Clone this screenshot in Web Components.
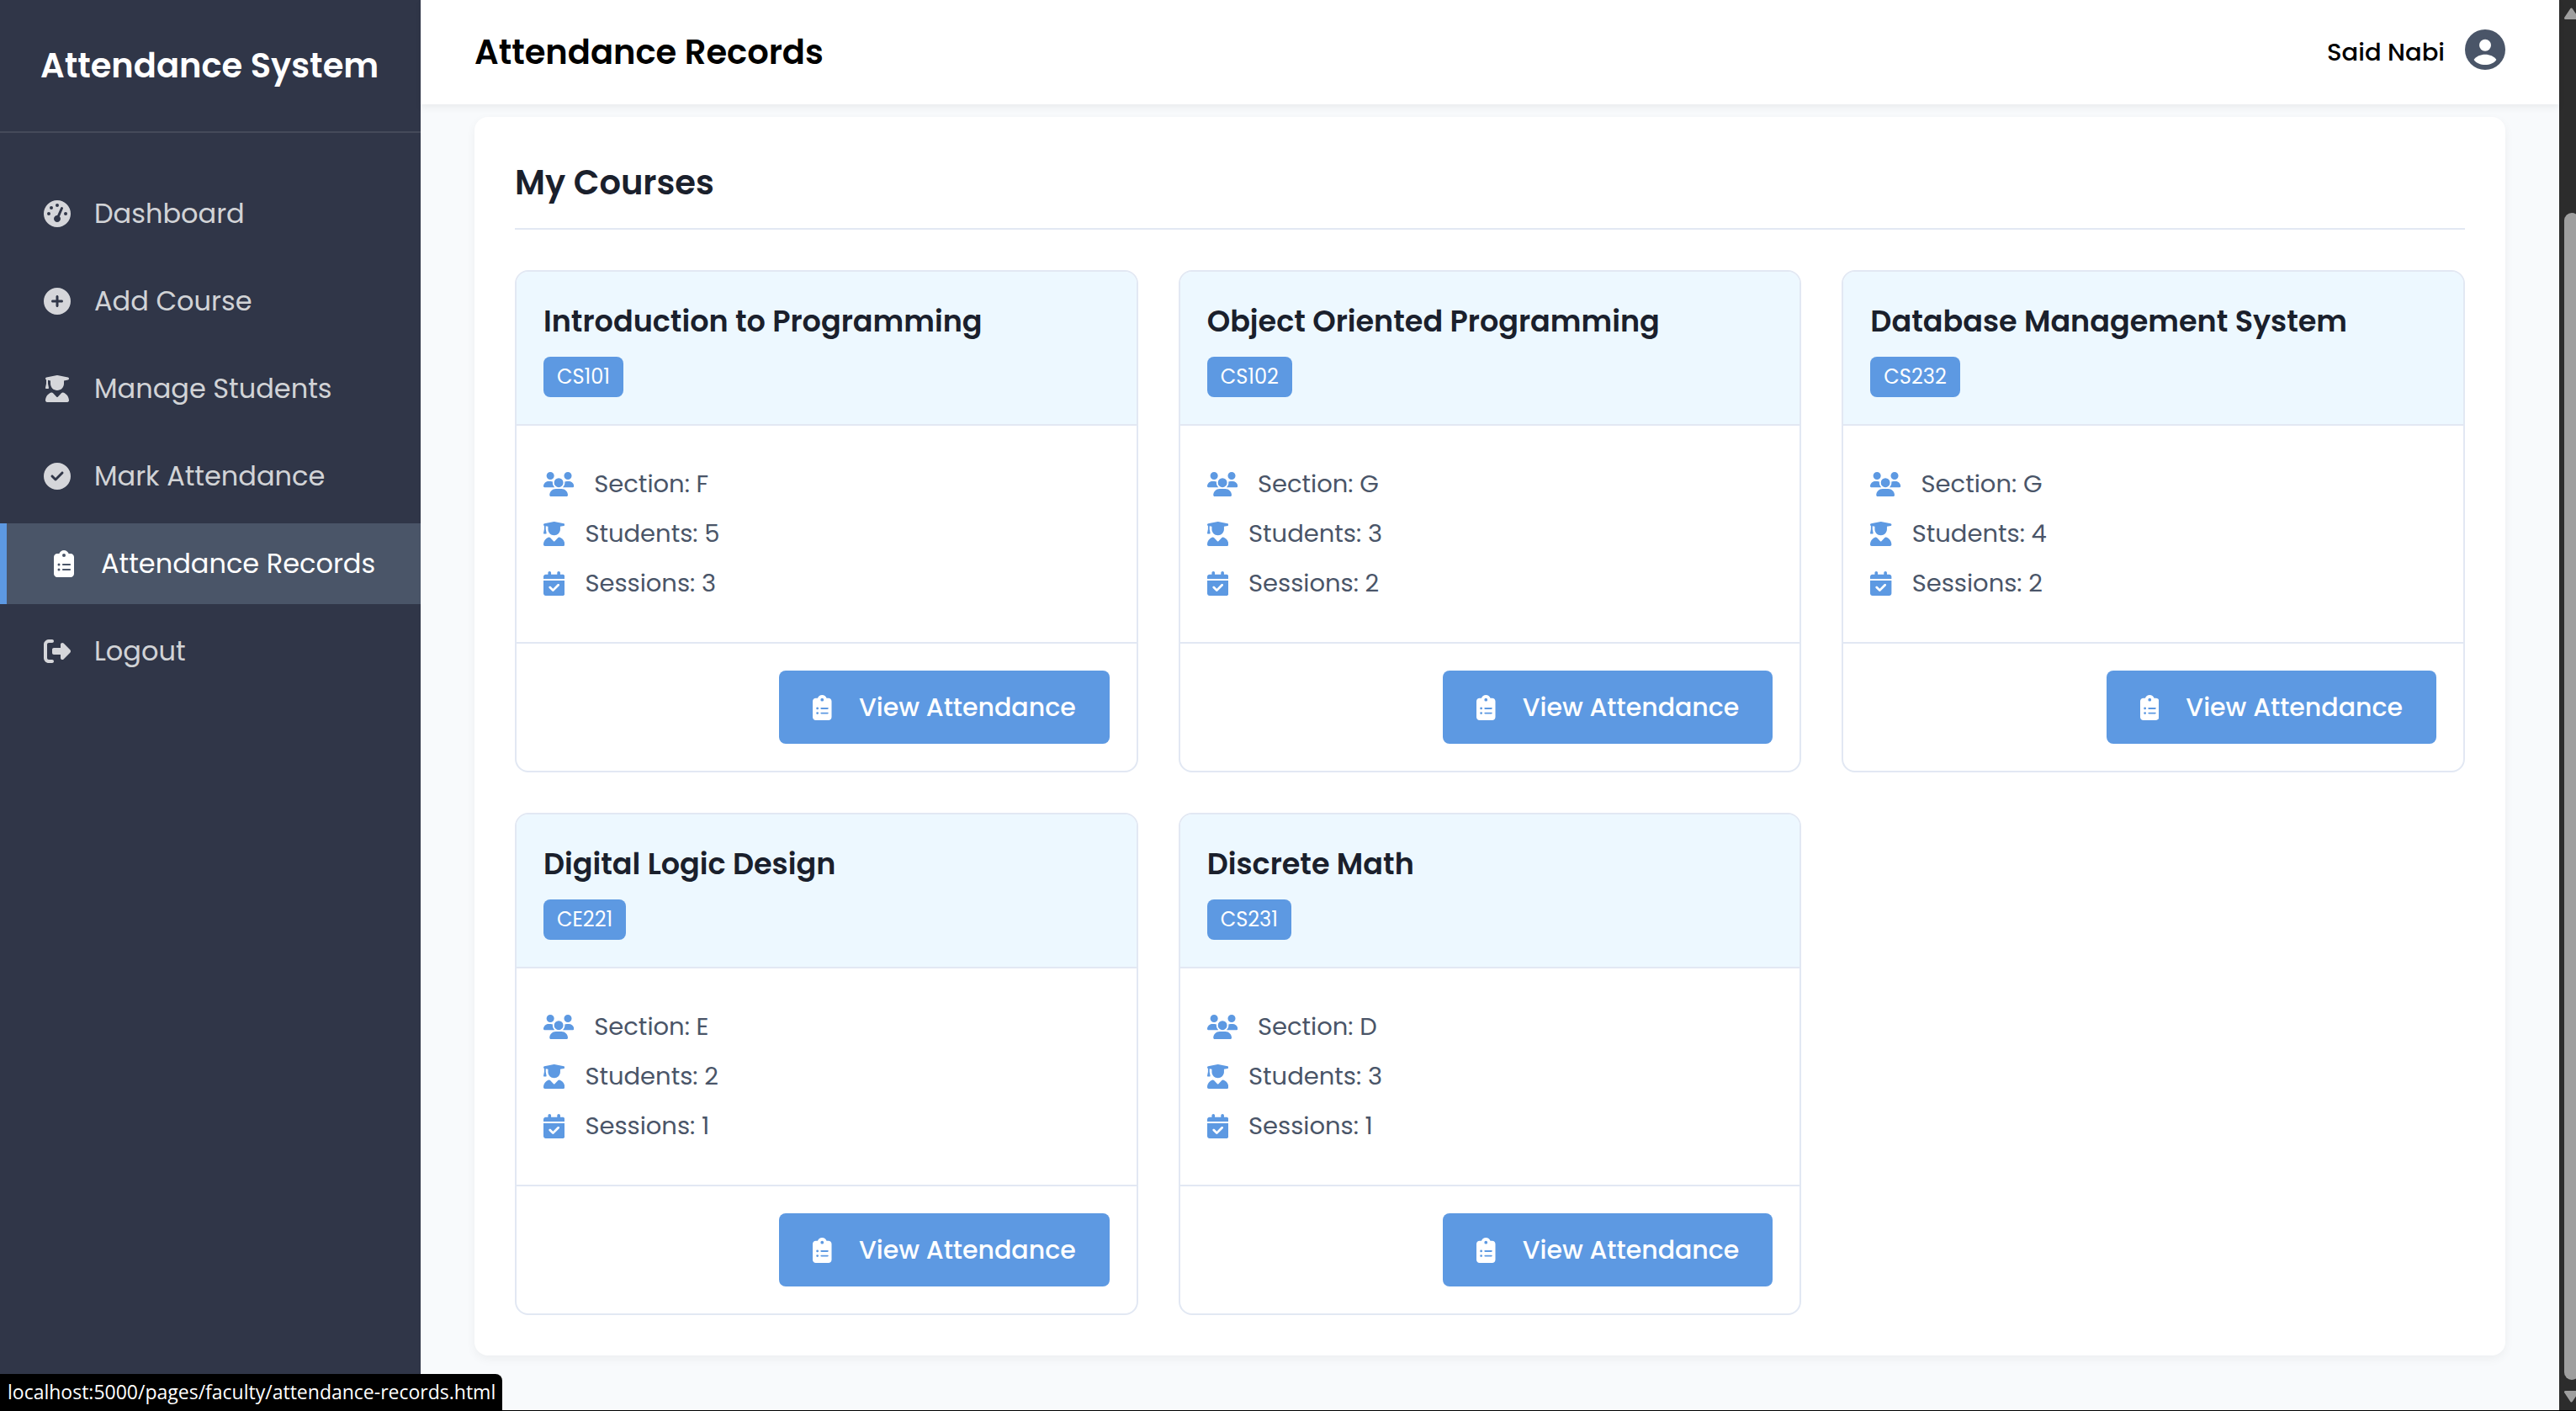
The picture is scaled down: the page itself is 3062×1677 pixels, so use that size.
<!DOCTYPE html>
<html lang="en">
<head>
<meta charset="utf-8">
<title>Attendance Records</title>
<style>
  :root {
    --primary: #5d99e2;
    --text-dark: #1a202c;
    --text-mid: #4a5568;
    --line: #e2e8f3;
  }
  html, body { margin: 0; height: 100%; overflow: hidden; }
  body { font-family: Poppins, Inter, sans-serif; background: #f8fafc; }
</style>
</head>
<body>
<app-shell>
  <side-bar slot="side" heading="Attendance System">
    <nav-item icon="gauge">Dashboard</nav-item>
    <nav-item icon="plus">Add Course</nav-item>
    <nav-item icon="graduate">Manage Students</nav-item>
    <nav-item icon="check">Mark Attendance</nav-item>
    <nav-item icon="clipboard" active>Attendance Records</nav-item>
    <nav-item icon="logout">Logout</nav-item>
  </side-bar>
  <page-header slot="header" user="Said Nabi">Attendance Records</page-header>
  <course-panel heading="My Courses">
    <course-card name="Introduction to Programming" code="CS101" section="F" students="5" sessions="3"></course-card>
    <course-card name="Object Oriented Programming" code="CS102" section="G" students="3" sessions="2"></course-card>
    <course-card name="Database Management System" code="CS232" section="G" students="4" sessions="2"></course-card>
    <course-card name="Digital Logic Design" code="CE221" section="E" students="2" sessions="1"></course-card>
    <course-card name="Discrete Math" code="CS231" section="D" students="3" sessions="1"></course-card>
  </course-panel>
  <scroll-rail slot="rail"></scroll-rail>
  <status-bubble slot="status">localhost:5000/pages/faculty/attendance-records.html</status-bubble>
</app-shell>

<script>
const ICONS = {
  gauge: [512, 'M0 256a256 256 0 1 1 512 0A256 256 0 1 1 0 256zM288 96a32 32 0 1 0 -64 0 32 32 0 1 0 64 0zM256 416c35.3 0 64-28.7 64-64c0-17.4-6.9-33.1-18.1-44.6L366 161.7c5.3-12.1-.2-26.3-12.3-31.6s-26.3 .2-31.6 12.3L257.9 288c-.6 0-1.3 0-1.9 0c-35.3 0-64 28.7-64 64s28.7 64 64 64zM176 144a32 32 0 1 0 -64 0 32 32 0 1 0 64 0zM96 288a32 32 0 1 0 0-64 32 32 0 1 0 0 64zm352-32a32 32 0 1 0 -64 0 32 32 0 1 0 64 0z'],
  plus: [512, 'M256 512A256 256 0 1 0 256 0a256 256 0 1 0 0 512zM232 344V280H168c-13.3 0-24-10.7-24-24s10.7-24 24-24h64V168c0-13.3 10.7-24 24-24s24 10.7 24 24v64h64c13.3 0 24 10.7 24 24s-10.7 24-24 24H280v64c0 13.3-10.7 24-24 24s-24-10.7-24-24z'],
  check: [512, 'M256 512A256 256 0 1 0 256 0a256 256 0 1 0 0 512zM369 209L241 337c-9.4 9.4-24.6 9.4-33.9 0l-64-64c-9.4-9.4-9.4-24.6 0-33.9s24.6-9.4 33.9 0l47 47L335 175c9.4-9.4 24.6-9.4 33.9 0s9.4 24.6 0 33.9z'],
  graduate: [448, 'M219.3 .5c3.1-.6 6.3-.6 9.4 0l200 40C439.9 42.7 448 52.6 448 64s-8.1 21.3-19.3 23.5L352 102.9V160c0 70.7-57.3 128-128 128s-128-57.3-128-128V102.9L48 93.3v65.1l15.7 78.4c.9 4.7-.3 9.6-3.3 13.3s-7.6 5.9-12.4 5.9H16c-4.8 0-9.3-2.1-12.4-5.9s-4.3-8.6-3.3-13.3L16 158.4V86.6C6.5 83.3 0 74.3 0 64C0 52.6 8.1 42.7 19.3 40.5l200-40zM111.9 327.7c10.5-3.4 21.8 .4 29.4 8.5l71 75.5c6.3 6.7 17 6.7 23.3 0l71-75.5c7.6-8.1 18.9-11.9 29.4-8.5C401 348.6 448 409.4 448 481.3c0 17-13.8 30.7-30.7 30.7H30.7C13.8 512 0 498.2 0 481.3c0-71.9 47-132.7 111.9-153.6z'],
  clipboard: [384, 'M192 0c-41.8 0-77.4 26.7-90.5 64H64C28.7 64 0 92.7 0 128V448c0 35.3 28.7 64 64 64H320c35.3 0 64-28.7 64-64V128c0-35.3-28.7-64-64-64H282.5C269.4 26.7 233.8 0 192 0zm0 64a32 32 0 1 1 0 64 32 32 0 1 1 0-64zM72 272a24 24 0 1 1 48 0 24 24 0 1 1 -48 0zm104-16H304c8.8 0 16 7.2 16 16s-7.2 16-16 16H176c-8.8 0-16-7.2-16-16s7.2-16 16-16zM72 368a24 24 0 1 1 48 0 24 24 0 1 1 -48 0zm88 0c0-8.8 7.2-16 16-16H304c8.8 0 16 7.2 16 16s-7.2 16-16 16H176c-8.8 0-16-7.2-16-16z'],
  logout: [512, 'M377.9 105.9L500.7 228.7c7.2 7.2 11.3 17.1 11.3 27.3s-4.1 20.1-11.3 27.3L377.9 406.1c-6.4 6.4-15 9.9-24 9.9c-18.7 0-33.9-15.2-33.9-33.9l0-62.1-128 0c-17.7 0-32-14.3-32-32l0-64c0-17.7 14.3-32 32-32l128 0 0-62.1c0-18.7 15.2-33.9 33.9-33.9c9 0 17.6 3.6 24 9.9zM160 96L96 96c-17.7 0-32 14.3-32 32l0 256c0 17.7 14.3 32 32 32l64 0c17.7 0 32 14.3 32 32s-14.3 32-32 32l-64 0c-53 0-96-43-96-96L0 128C0 75 43 32 96 32l64 0c17.7 0 32 14.3 32 32s-14.3 32-32 32z'],
  users: [640, 'M144 0a80 80 0 1 1 0 160A80 80 0 1 1 144 0zM512 0a80 80 0 1 1 0 160A80 80 0 1 1 512 0zM0 298.7C0 239.8 47.8 192 106.7 192h42.7c15.9 0 31 3.5 44.6 9.7c-1.3 7.2-1.9 14.7-1.9 22.3c0 38.2 16.8 72.5 43.3 96c-.2 0-.4 0-.7 0H21.3C9.6 320 0 310.4 0 298.7zM405.3 320c-.2 0-.4 0-.7 0c26.6-23.5 43.3-57.8 43.3-96c0-7.6-.7-15-1.9-22.3c13.6-6.3 28.7-9.7 44.6-9.7h42.7C592.2 192 640 239.8 640 298.7c0 11.8-9.6 21.3-21.3 21.3H405.3zM224 224a96 96 0 1 1 192 0 96 96 0 1 1 -192 0zM128 485.3C128 411.7 187.7 352 261.3 352H378.7C452.3 352 512 411.7 512 485.3c0 14.7-11.9 26.7-26.7 26.7H154.7c-14.7 0-26.7-11.9-26.7-26.7z'],
  calendar: [448, 'M128 0c17.7 0 32 14.3 32 32V64H288V32c0-17.7 14.3-32 32-32s32 14.3 32 32V64h48c26.5 0 48 21.5 48 48v48H0V112C0 85.5 21.5 64 48 64H96V32c0-17.7 14.3-32 32-32zM0 192H448V464c0 26.5-21.5 48-48 48H48c-26.5 0-48-21.5-48-48V192zM329 305c9.4-9.4 9.4-24.6 0-33.9s-24.6-9.4-33.9 0l-95 95-47-47c-9.4-9.4-24.6-9.4-33.9 0s-9.4 24.6 0 33.9l64 64c9.4 9.4 24.6 9.4 33.9 0L329 305z']
};

function define(name, render) {
  customElements.define(name, class extends HTMLElement {
    connectedCallback() {
      if (this.shadowRoot) return;
      this.attachShadow({ mode: 'open' }).innerHTML = render(this);
    }
  });
}

define('app-icon', el => {
  const [w, d] = ICONS[el.getAttribute('name')];
  return `<style>
    :host { display: block; flex: none; height: var(--icon-size, 32px); }
    svg { display: block; height: 100%; fill: currentColor; fill-rule: evenodd; }
  </style><svg viewBox="0 0 ${w} 512" aria-hidden="true"><path d="${d}"/></svg>`;
});

define('app-shell', () => `<style>
    :host { display: flex; height: 100%; box-sizing: border-box; border-bottom: 1px solid #000; overflow: hidden; }
    .main { flex: 1; min-width: 0; display: flex; flex-direction: column; }
    .content { flex: 1; min-height: 0; padding: 15px 64px 64px; }
  </style>
  <slot name="side"></slot>
  <div class="main"><slot name="header"></slot><main class="content"><slot></slot></main></div>
  <slot name="rail"></slot><slot name="status"></slot>`);

define('side-bar', el => `<style>
    :host { display: block; flex: none; width: 500px; background: #303648; color: #fff; }
    h2 { margin: 0; padding: 48px; font-size: 40px; line-height: 60px; font-weight: 600; white-space: nowrap; border-bottom: 2px solid rgba(255,255,255,.1); }
    nav { display: flex; flex-direction: column; gap: 8px; padding: 48px 0; }
  </style><h2>${el.getAttribute('heading')}</h2><nav><slot></slot></nav>`);

define('nav-item', el => `<style>
    :host { display: block; color: rgba(255,255,255,.8); }
    :host([active]) { background: #4a5568; color: #fff; border-left: 8px solid var(--primary); }
    a { display: flex; align-items: center; gap: 24px; padding: 24px 48px; font-size: 32px; line-height: 48px; color: inherit; text-decoration: none; white-space: nowrap; }
    .ico { flex: none; width: 40px; display: flex; justify-content: center; }
  </style><a href="#"><span class="ico"><app-icon name="${el.getAttribute('icon')}"></app-icon></span><slot></slot></a>`);

define('page-header', el => `<style>
    :host { display: flex; justify-content: space-between; align-items: center; padding: 32px 64px; background: #fff; color: #000; box-shadow: 0 4px 8px rgba(0,0,0,.06); position: relative; }
    h1 { margin: 0; font-size: 40px; line-height: 60px; font-weight: 600; }
    .user { display: flex; align-items: center; gap: 24px; font-size: 29px; line-height: 44px; font-weight: 500; }
    button { border: 0; background: none; padding: 0 0 6px; }
    svg { display: block; width: 48px; height: 48px; }
  </style><h1><slot></slot></h1>
  <div class="user"><span>${el.getAttribute('user')}</span>
    <button aria-label="Account"><svg viewBox="0 0 48 48"><circle cx="24" cy="24" r="24" fill="#4a5568"/><circle cx="24" cy="18.8" r="7" fill="#fff"/><path d="M10.6 36C13.5 32 18.5 29.8 24 29.8S34.5 32 37.4 36C34.5 40 29.5 42 24 42S13.5 40 10.6 36z" fill="#fff"/></svg></button></div>`);

define('course-panel', el => `<style>
    :host { display: block; padding: 48px; background: #fff; border-radius: 16px; box-shadow: 0 4px 12px rgba(0,0,0,.05); }
    h2 { margin: 0 0 48px; padding-bottom: 24px; border-bottom: 2px solid var(--line); font-size: 40px; line-height: 60px; font-weight: 600; color: var(--text-dark); }
    .grid { display: grid; grid-template-columns: repeat(auto-fill, minmax(600px, 1fr)); gap: 48px; }
  </style><h2>${el.getAttribute('heading')}</h2><div class="grid"><slot></slot></div>`);

define('course-card', el => {
  const a = n => el.getAttribute(n);
  return `<style>
    :host { display: block; border: 2px solid var(--line); border-radius: 16px; overflow: hidden; background: #fff; }
    header { padding: 32px; background: #edf8ff; border-bottom: 2px solid var(--line); }
    h3 { margin: 0 0 16px; font-size: 35px; line-height: 53px; font-weight: 600; color: var(--text-dark); }
    .code { display: block; width: max-content; padding: 4px 16px; border-radius: 8px; background: var(--primary); color: #fff; font-size: 24px; line-height: 40px; }
    ul { margin: 0; padding: 48px 32px; list-style: none; display: flex; flex-direction: column; gap: 16px; font-size: 29px; line-height: 43px; color: var(--text-mid); }
    li { display: flex; align-items: center; gap: 24px; --icon-size: 29px; }
    li app-icon { color: var(--primary); }
    footer { display: flex; justify-content: flex-end; padding: 32px; border-top: 2px solid var(--line); }
    button { display: flex; align-items: center; gap: 32px; padding: 20px 40px; border: 0; border-radius: 8px; background: var(--primary); color: #fff; font-family: inherit; font-size: 30px; line-height: 47px; font-weight: 500; --icon-size: 30px; }
  </style>
  <header><h3>${a('name')}</h3><span class="code">${a('code')}</span></header>
  <ul>
    <li><app-icon name="users"></app-icon>Section: ${a('section')}</li>
    <li><app-icon name="graduate"></app-icon>Students: ${a('students')}</li>
    <li><app-icon name="calendar"></app-icon>Sessions: ${a('sessions')}</li>
  </ul>
  <footer><button type="button"><app-icon name="clipboard"></app-icon>View Attendance</button></footer>`;
});

define('scroll-rail', () => `<style>
    :host { display: flex; flex-direction: column; flex: none; width: 14px; padding: 9px 0 9px 6px; background: #2c2c2c; overflow: hidden; }
    svg { display: block; flex: none; width: 17px; height: 14px; fill: #9f9f9f; stroke: #9f9f9f; stroke-width: 3; stroke-linejoin: round; }
    .track { flex: 1; display: flex; flex-direction: column; padding: 230px 0 13px; }
    .thumb { flex: 1; width: 18px; border-radius: 9px; background: #9f9f9f; }
  </style>
  <svg viewBox="0 0 17 14"><path d="M8.5 2L15.5 12.5H1.5z"/></svg>
  <div class="track"><div class="thumb"></div></div>
  <svg viewBox="0 0 17 14"><path d="M1.5 1.5H15.5L8.5 12z"/></svg>`);

define('status-bubble', () => `<style>
    :host { display: block; position: absolute; left: 0; bottom: 0; padding: 4px 8px 6px 9px; background: #000; color: #fff; border-top-right-radius: 8px; font-family: "Segoe UI", "Open Sans", sans-serif; font-size: 23px; line-height: 34px; z-index: 2; }
  </style><slot></slot>`);
</script>
</body>
</html>
